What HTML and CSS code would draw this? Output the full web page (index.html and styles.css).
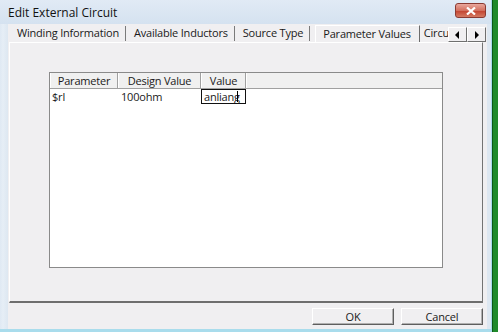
FILE: index.html
```html
<!DOCTYPE html>
<html>
<head>
<meta charset="utf-8">
<link rel="stylesheet" href="styles.css">
</head>
<body>
<div class="window">
  <div class="titlebar">
    <span class="title">Edit External Circuit</span>
    <div class="close"><svg width="12" height="8" viewBox="0 0 12 8"><path d="M2 0.5 L10 7.5 M10 0.5 L2 7.5" stroke="#fff" stroke-width="2.2"/></svg></div>
  </div>
  <div class="client">
    <div class="tabstrip">
      <div class="tab first">Winding Information</div>
      <div class="tab">Available Inductors</div>
      <div class="tab">Source Type</div>
      <div class="tab active">Parameter Values</div>
      <div class="tab clipped">Circuit</div>
      <div class="scroller">
        <div class="sbtn"><svg width="5" height="8" viewBox="0 0 5 8"><path d="M4 0 L0 4 L4 8 Z" fill="#000"/></svg></div>
        <div class="sbtn"><svg width="5" height="8" viewBox="0 0 5 8"><path d="M1 0 L5 4 L1 8 Z" fill="#000"/></svg></div>
      </div>
    </div>
    <div class="panel">
      <div class="grid">
        <div class="row head">
          <div class="cell c1">Parameter</div>
          <div class="cell c2">Design Value</div>
          <div class="cell c3">Value</div>
          <div class="cell filler"></div>
        </div>
        <div class="row body">
          <div class="cell c1">$rl</div>
          <div class="cell c2">100ohm</div>
          <div class="cell c3 edit"><span class="edtext">anliang</span><span class="caret"></span></div>
        </div>
      </div>
    </div>
    <div class="buttons">
      <div class="btn">OK</div>
      <div class="btn">Cancel</div>
    </div>
  </div>
</div>
<div class="desktop"></div>
</body>
</html>
```

FILE: styles.css
```css
html, body {
  margin: 0;
  padding: 0;
}
* {
  box-sizing: border-box;
}
body {
  width: 498px;
  height: 332px;
  display: flex;
  overflow: hidden;
  background: #1e8a2a;
  font-family: "Open Sans", "Noto Sans", "Liberation Sans", sans-serif;
  font-size: 11px;
  letter-spacing: -0.2px;
  color: #1a1a1a;
}
.window {
  width: 492px;
  height: 332px;
  flex-shrink: 0;
  border-right: 1px solid #a6d8ec;
  border-bottom: 3px solid #a9dcec;
  background: linear-gradient(to right, #dfe9f3 0, #e6eef6 3px, #dde7f1 8px);
  display: flex;
  flex-direction: column;
}
.desktop {
  flex: 1;
  background: #1f8a2b;
  border-left: 1px solid #0d5a16;
}
.titlebar {
  height: 24px;
  flex-shrink: 0;
  display: flex;
  align-items: center;
  justify-content: space-between;
  padding: 0 5px 0 8px;
  background: linear-gradient(#e1eaf5, #d5e2f0);
}
.title {
  font-size: 12px;
  color: #111;
  letter-spacing: 0;
}
.close {
  width: 31px;
  height: 15px;
  margin-top: -3px;
  border: 1px solid #8a3a32;
  border-radius: 3px;
  background: linear-gradient(#e9a79c, #d3705f 50%, #c2412e 51%, #d47a62);
  display: flex;
  align-items: center;
  justify-content: center;
}
.client {
  height: 305px;
  flex-shrink: 0;
  margin: 0 4px 0 8px;
  background: #f0eff1;
  display: flex;
  flex-direction: column;
}
.tabstrip {
  height: 18px;
  flex-shrink: 0;
  display: flex;
  align-items: flex-end;
  padding-left: 3px;
  position: relative;
  overflow: hidden;
}
.tab {
  flex-shrink: 0;
  padding: 0 6px 0 8px;
  height: 15px;
  line-height: 14px;
  border-right: 1px solid #7a7a7a;
  margin-bottom: 1px;
  white-space: nowrap;
}
.tab.first {
  padding-left: 6px;
}
.tab.active {
  height: 18px;
  line-height: 14px;
  margin-bottom: -1px;
  padding: 1px 8px 3px 7px;
  margin-left: 5px;
  border-top: 1px solid #ffffff;
  border-left: 1px solid #ffffff;
  border-right: 1px solid #6d6d6d;
  background: #f0eff1;
  position: relative;
  z-index: 1;
}
.tab.clipped {
  border-right: none;
  padding-left: 4px;
  padding-right: 0;
}
.scroller {
  position: absolute;
  right: 1px;
  top: 3px;
  display: flex;
  background: #f0eff1;
  z-index: 2;
}
.sbtn {
  width: 19px;
  height: 15px;
  border: 1px solid;
  border-color: #ffffff #6f6f6f #6f6f6f #ffffff;
  display: flex;
  align-items: center;
  justify-content: center;
  background: #f0eff1;
}
.panel {
  height: 261px;
  flex-shrink: 0;
  margin: 0 4px 0 1px;
  border-top: 1px solid #ffffff;
  border-left: 1px solid #ffffff;
  border-right: 1px solid #737373;
  border-bottom: 2px solid #6e6e6e;
  padding: 29px 0 0 39px;
}
.grid {
  width: 394px;
  height: 196px;
  border: 1px solid #8a8a8a;
  background: #ffffff;
}
.row {
  display: flex;
}
.row.head {
  height: 16px;
  background: #f0f0f0;
  border-bottom: 1px solid #a0a0a0;
}
.row.body {
  height: 15px;
}
.cell {
  line-height: 15px;
  white-space: nowrap;
  overflow: hidden;
}
.head .cell {
  text-align: center;
  border-right: 1px solid #a0a0a0;
  border-left: 1px solid #ffffff;
}
.head .filler {
  flex: 1;
  border-right: none;
}
.body .cell {
  padding-left: 2px;
}
.c1 { width: 68px; }
.c2 { width: 83px; }
.c3 { width: 45px; }
.body .c2 { padding-left: 3px; }
.edit {
  border: 1px solid #111;
  padding-left: 2px;
  line-height: 13px;
  display: flex;
  align-items: center;
}
.edtext {
  white-space: nowrap;
}
.caret {
  display: inline-block;
  flex-shrink: 0;
  width: 1px;
  height: 11px;
  background: #000;
  margin-left: -3px;
}
.buttons {
  display: flex;
  justify-content: flex-end;
  gap: 7px;
  padding: 5px 4px 0 0;
}
.btn {
  width: 82px;
  height: 17px;
  line-height: 15px;
  text-align: center;
  border: 1px solid;
  border-color: #ffffff #5e5e5e #5e5e5e #ffffff;
  box-shadow: inset -1px -1px 0 #b0b0b0;
  background: #f0eff1;
}
```
